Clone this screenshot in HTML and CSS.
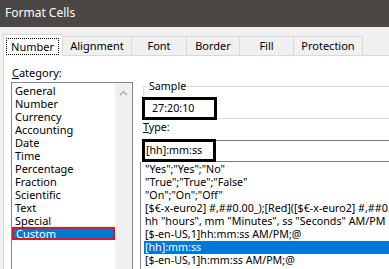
FILE: index.html
```html
<!DOCTYPE html>
<html>
<head>
<meta charset="utf-8">
<title>Format Cells</title>
<link rel="stylesheet" href="styles.css">
</head>
<body>
<div class="window">
  <div class="titlebar">Format Cells</div>
  <div class="tabstrip">
    <div class="tab tab-number active"><span class="focus">Number</span></div>
    <div class="tab tab-align">Alignment</div>
    <div class="tab tab-font">Font</div>
    <div class="tab tab-border">Border</div>
    <div class="tab tab-fill">Fill</div>
    <div class="tab tab-prot">Protection</div>
  </div>
  <div class="panel">
    <div class="left">
      <div class="label"><u>C</u>ategory:</div>
      <div class="listbox">
        <ul class="items">
          <li>General</li>
          <li>Number</li>
          <li>Currency</li>
          <li>Accounting</li>
          <li>Date</li>
          <li>Time</li>
          <li>Percentage</li>
          <li>Fraction</li>
          <li>Scientific</li>
          <li>Text</li>
          <li>Special</li>
          <li class="selected">Custom</li>
        </ul>
        <div class="scrollbar">
          <svg class="arrow" width="9" height="6" viewBox="0 0 9 6"><path d="M1 5 L4.5 1.5 L8 5" fill="none" stroke="#a6a6a6" stroke-width="1.2"/></svg>
        </div>
      </div>
    </div>
    <div class="right">
      <div class="group">
        <div class="legend">Sample</div>
        <div class="sample-box">27:20:10</div>
      </div>
      <div class="label type-label"><u>T</u>ype:</div>
      <div class="type-input"><div class="type-box">[hh]:mm:ss</div></div>
      <ul class="typelist">
        <li>"Yes";"Yes";"No"</li>
        <li>"True";"True";"False"</li>
        <li>"On";"On";"Off"</li>
        <li>[$€-x-euro2] #,##0.00_);[Red]([$€-x-euro2] #,##0.00)</li>
        <li>hh "hours", mm "Minutes", ss "Seconds" AM/PM</li>
        <li>[$-en-US,1]hh:mm:ss AM/PM;@</li>
        <li class="selected">[hh]:mm:ss</li>
        <li>[$-en-US,1]h:mm:ss AM/PM;@</li>
      </ul>
    </div>
  </div>
</div>
</body>
</html>
```

FILE: styles.css
```css
* { box-sizing: border-box; }
html, body { margin: 0; padding: 0; }
body {
  width: 389px;
  height: 269px;
  overflow: hidden;
  font-family: "Noto Sans", "Open Sans", sans-serif;
  font-size: 11px;
  color: #000;
  background: #f0f0f0;
}
.window {
  width: 389px;
  height: 269px;
  overflow: hidden;
  background: #f0f0f0;
}
.titlebar {
  height: 27px;
  background: #4a4745;
  color: #fff;
  font-size: 12px;
  line-height: 25px;
  padding-left: 5px;
  white-space: nowrap;
}
.tabstrip {
  height: 28px;
  display: flex;
  align-items: flex-end;
  padding-left: 3px;
  position: relative;
  z-index: 2;
}
.tab {
  height: 19px;
  border: 1px solid #d9d9d9;
  border-bottom: none;
  margin-left: -1px;
  background: #f0f0f0;
  text-align: center;
  line-height: 17px;
  white-space: nowrap;
  flex: none;
}
.tab-number { margin-left: 0; width: 60px; }
.tab-align { width: 70px; }
.tab-font { width: 56px; }
.tab-border { width: 54px; }
.tab-fill { width: 55px; }
.tab-prot { width: 70px; }
.tab.active {
  height: 22px;
  margin-bottom: -1px;
  background: #fff;
  padding: 3px 3px 0 2px;
  text-align: left;
  position: relative;
}
.focus {
  display: block;
  width: 53px;
  height: 17px;
  border: 1px dotted #000;
  text-align: center;
  line-height: 15px;
}
.panel {
  margin-left: 3px;
  height: 214px;
  background: #fff;
  border-top: 1px solid #d9d9d9;
  border-left: 1px solid #d9d9d9;
  display: flex;
  align-items: flex-start;
}
.left {
  flex: none;
  width: 129px;
  padding-left: 7px;
  padding-top: 10px;
}
.label {
  height: 14px;
  line-height: 14px;
  padding-left: 1px;
  white-space: nowrap;
}
.listbox {
  margin-top: 2px;
  width: 122px;
  height: 200px;
  border: 1px solid #828790;
  display: flex;
}
.items {
  list-style: none;
  margin: 0;
  padding: 1px 0 0 0;
  width: 103px;
  flex: none;
}
.items li {
  height: 13px;
  line-height: 13px;
  padding-left: 3px;
  white-space: nowrap;
}
.items li.selected {
  background: #0078d7;
  color: #fff;
  box-shadow: inset 0 0 0 2px #ee1111;
  padding-left: 4px;
}
.scrollbar {
  flex: 1;
  background: #f0f0f0;
  display: flex;
  justify-content: center;
  padding-top: 7px;
  align-items: flex-start;
}
.arrow { display: block; }
.right {
  flex: none;
  width: 260px;
  margin-left: 9px;
  font-size: 10.7px;
}
.group {
  margin-top: 30px;
  margin-left: 1px;
  border: 1px solid #dcdcdc;
  border-right: none;
  height: 33px;
}
.legend {
  width: fit-content;
  margin: -7px 0 0 4px;
  padding: 0 1px;
  background: #fff;
  line-height: 13px;
  white-space: nowrap;
}
.sample-box {
  margin: 4px 0 0 -2px;
  width: 75px;
  height: 23px;
  border: 3px solid #000;
  background: #fff;
  padding-left: 7px;
  line-height: 16px;
  position: relative;
}
.type-label {
  margin-top: 1px;
}
.type-input {
  margin-top: 6px;
  height: 22px;
  border: 1px solid #7a7a7a;
  border-right: none;
}
.type-box {
  margin: -2px 0 -1px -1px;
  width: 74px;
  height: 23px;
  border: 3px solid #000;
  padding-left: 1px;
  line-height: 17px;
  background: #fff;
  white-space: nowrap;
}
.typelist {
  list-style: none;
  margin: 0 0 0 -2px;
  padding: 1px 0 0 0;
  height: 120px;
  border-left: 1px solid #828790;
}
.typelist li {
  margin-left: 3px;
  padding-left: 1px;
  height: 13px;
  line-height: 13px;
  white-space: nowrap;
}
.typelist li.selected {
  background: #0078d7;
  color: #fff;
}
```
